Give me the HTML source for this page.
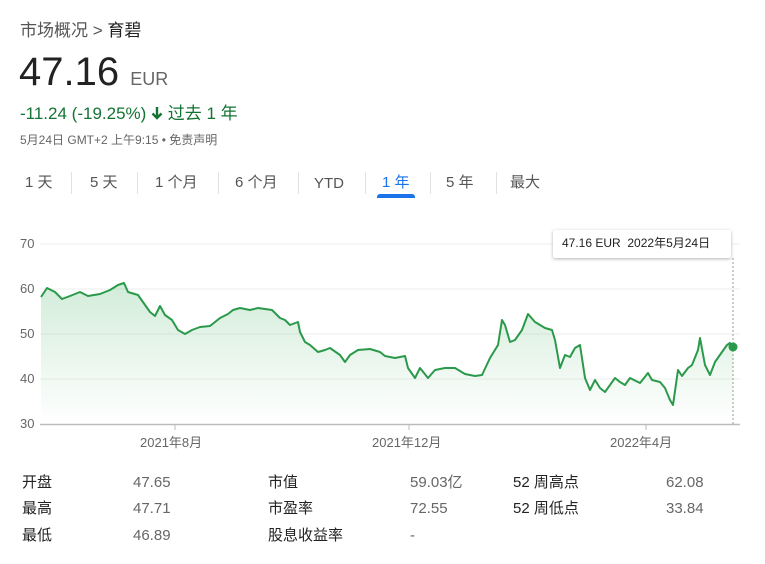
<!DOCTYPE html><html><head><meta charset="utf-8"><style>
body{margin:0;width:765px;height:564px;background:#fff;font-family:"Liberation Sans","Noto Sans CJK SC",sans-serif;position:relative;overflow:hidden}
.a{position:absolute;white-space:nowrap}
.t{font-size:15px;color:#555;top:171px}
.s{position:absolute;top:172px;width:1px;height:22px;background:#e2e2e2}
.l{font-size:15px;color:#222}
.v{font-size:15px;color:#666}
.y{font-size:13px;color:#666}
</style></head><body>
<div class="a" style="left:20px;top:16px;font-size:17px;color:#555">市场概况 &gt; <span style="color:#222">育碧</span></div>
<div class="a" style="left:19px;top:50px;font-size:40px;color:#222">47.16 <span style="font-size:18px;color:#666">EUR</span></div>
<div class="a" style="left:20px;top:99px;font-size:17px;color:#137333">-11.24 (-19.25%) <svg width="12" height="14" viewBox="0 0 12 14" style="vertical-align:-1px"><path d="M6 1V12M1.5 7.5L6 12L10.5 7.5" stroke="#137333" stroke-width="2.4" fill="none"/></svg> 过去 1 年</div>
<div class="a" style="left:20px;top:131px;font-size:12px;color:#666">5月24日 GMT+2 上午9:15 • 免责声明</div>
<div class="a t" style="left:25px">1 天</div><div class="s" style="left:71px"></div>
<div class="a t" style="left:90px">5 天</div><div class="s" style="left:137px"></div>
<div class="a t" style="left:155px">1 个月</div><div class="s" style="left:218px"></div>
<div class="a t" style="left:235px">6 个月</div><div class="s" style="left:298px"></div>
<div class="a t" style="left:314px;top:175px">YTD</div><div class="s" style="left:365px"></div>
<div class="a t" style="left:382px;color:#1a73e8">1 年</div><div class="s" style="left:430px"></div>
<div class="a t" style="left:446px">5 年</div><div class="s" style="left:496px"></div>
<div class="a t" style="left:510px">最大</div>
<div class="a" style="left:377px;top:194px;width:38px;height:4px;background:#1a73e8;border-radius:3px 3px 0 0"></div>
<svg class="a" style="left:0;top:0" width="765" height="564">
<defs><linearGradient id="g" x1="0" y1="0" x2="0" y2="1"><stop offset="0" stop-color="#34a853" stop-opacity=".22"/><stop offset="1" stop-color="#34a853" stop-opacity="0"/></linearGradient></defs>
<g stroke="#eee" stroke-width="1"><line x1="40" y1="244" x2="740" y2="244"/><line x1="40" y1="289" x2="740" y2="289"/><line x1="40" y1="334" x2="740" y2="334"/><line x1="40" y1="379" x2="740" y2="379"/></g>
<line x1="40" y1="424.5" x2="740" y2="424.5" stroke="#bbb" stroke-width="1.5"/>
<g stroke="#bbb"><line x1="175" y1="424" x2="175" y2="430"/><line x1="409" y1="424" x2="409" y2="430"/><line x1="646" y1="424" x2="646" y2="430"/></g>
<line x1="733" y1="258" x2="733" y2="424" stroke="#999" stroke-dasharray="2,2"/>
<polygon fill="url(#g)" points="41,297 47,288 55,292 62,299 70,296 80,292 88,296 100,294 110,290 118,285 124,283 128,292 138,295 150,312 155,316 160,306 165,315 172,320 178,330 185,334 192,330 200,327 210,326 220,318 228,314 233,310 240,308 250,310 258,308 265,309 272,310 280,318 285,320 290,325 298,322 300,332 305,342 310,345 318,352 325,350 330,348 340,355 345,362 350,355 358,350 370,349 380,352 385,356 395,358 405,356 408,368 415,378 420,368 428,378 435,370 445,368 455,368 465,374 475,376 482,375 490,358 498,345 502,320 505,325 510,342 515,340 522,330 528,314 535,322 545,328 552,330 555,340 560,368 565,355 570,357 575,348 580,345 585,378 590,390 595,380 600,388 605,392 615,378 620,382 625,385 630,378 640,383 648,373 652,380 660,382 665,388 670,400 673,405 678,370 682,376 688,368 692,365 698,350 700,338 705,365 710,375 715,362 722,352 727,345 730,343 733,347 733,424 41,424"/>
<polyline fill="none" stroke="#2a9a4a" stroke-width="2" stroke-linejoin="round" points="41,297 47,288 55,292 62,299 70,296 80,292 88,296 100,294 110,290 118,285 124,283 128,292 138,295 150,312 155,316 160,306 165,315 172,320 178,330 185,334 192,330 200,327 210,326 220,318 228,314 233,310 240,308 250,310 258,308 265,309 272,310 280,318 285,320 290,325 298,322 300,332 305,342 310,345 318,352 325,350 330,348 340,355 345,362 350,355 358,350 370,349 380,352 385,356 395,358 405,356 408,368 415,378 420,368 428,378 435,370 445,368 455,368 465,374 475,376 482,375 490,358 498,345 502,320 505,325 510,342 515,340 522,330 528,314 535,322 545,328 552,330 555,340 560,368 565,355 570,357 575,348 580,345 585,378 590,390 595,380 600,388 605,392 615,378 620,382 625,385 630,378 640,383 648,373 652,380 660,382 665,388 670,400 673,405 678,370 682,376 688,368 692,365 698,350 700,338 705,365 710,375 715,362 722,352 727,345 730,343 733,347"/>
<circle cx="733" cy="347" r="4.5" fill="#2a9a4a"/>
</svg>
<div class="a y" style="left:20px;top:236px">70</div>
<div class="a y" style="left:20px;top:281px">60</div>
<div class="a y" style="left:20px;top:326px">50</div>
<div class="a y" style="left:20px;top:371px">40</div>
<div class="a y" style="left:20px;top:416px">30</div>
<div class="a y" style="left:140px;top:432px">2021年8月</div>
<div class="a y" style="left:372px;top:432px">2021年12月</div>
<div class="a y" style="left:610px;top:432px">2022年4月</div>
<div class="a" style="left:553px;top:230px;width:178px;height:28px;background:#fff;box-shadow:0 1px 3px rgba(0,0,0,.3);border-radius:2px;font-size:12px;color:#222;line-height:26px;text-indent:9px">47.16 EUR&nbsp; 2022年5月24日</div>
<div class="a l" style="left:22px;top:471px">开盘</div><div class="a v" style="left:133px;top:474px">47.65</div>
<div class="a l" style="left:22px;top:497px">最高</div><div class="a v" style="left:133px;top:500px">47.71</div>
<div class="a l" style="left:22px;top:524px">最低</div><div class="a v" style="left:133px;top:527px">46.89</div>
<div class="a l" style="left:268px;top:471px">市值</div><div class="a v" style="left:410px;top:471px">59.03亿</div>
<div class="a l" style="left:268px;top:497px">市盈率</div><div class="a v" style="left:410px;top:500px">72.55</div>
<div class="a l" style="left:268px;top:524px">股息收益率</div><div class="a v" style="left:410px;top:527px">-</div>
<div class="a l" style="left:513px;top:471px">52 周高点</div><div class="a v" style="left:666px;top:474px">62.08</div>
<div class="a l" style="left:513px;top:497px">52 周低点</div><div class="a v" style="left:666px;top:500px">33.84</div>
</body></html>
